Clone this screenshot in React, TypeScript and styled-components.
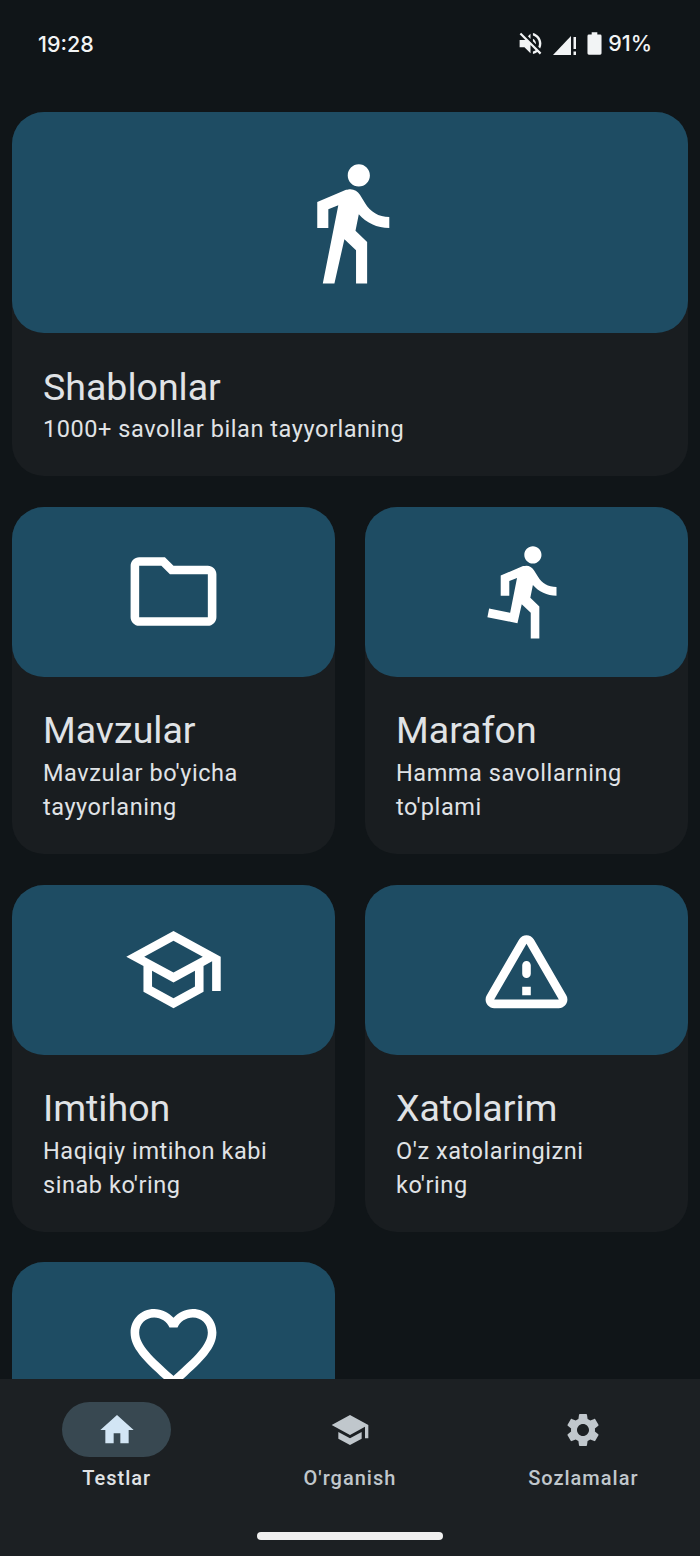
import * as React from "react";
import styled, { createGlobalStyle } from "styled-components";

const GlobalStyle = createGlobalStyle`
  html, body {
    margin: 0;
    padding: 0;
    background: #101518;
  }
  * {
    box-sizing: border-box;
  }
`;

const Screen = styled.div`
  width: 700px;
  height: 1556px;
  display: flex;
  flex-direction: column;
  overflow: hidden;
  background: #101518;
  font-family: Roboto, "Liberation Sans", sans-serif;
`;

const StatusBar = styled.div`
  flex: 0 0 112px;
  display: flex;
  justify-content: space-between;
  align-items: flex-start;
  padding: 31px 48px 0 38px;
  color: #f2f4f5;
  font-family: Inter, Roboto, sans-serif;
  font-weight: 500;
  font-size: 21.5px;
  line-height: 27px;
`;

const StatusRight = styled.div`
  display: flex;
  align-items: center;
  margin-top: -2px;
`;

const StatusIcon = styled.svg<{ $gap: number }>`
  display: block;
  fill: currentColor;
  margin-right: ${props => props.$gap}px;
`;

const Content = styled.div`
  flex: 1;
  min-height: 0;
  overflow: hidden;
  padding: 0 12px;
`;

const Grid = styled.div`
  display: grid;
  grid-template-columns: 323px 323px;
  column-gap: 30px;
  row-gap: 30.7px;
`;

const Card = styled.div<{ $wide?: boolean }>`
  grid-column: ${props => (props.$wide ? "1 / span 2" : "auto")};
  background: #191d20;
  border-radius: 32px;
`;

const Banner = styled.div<{ $wide?: boolean }>`
  height: ${props => (props.$wide ? 221.2 : 170)}px;
  display: flex;
  align-items: center;
  justify-content: center;
  background: #1e4c63;
  border-radius: 32px;
`;

const BannerIcon = styled.svg`
  display: block;
  fill: #ffffff;
`;

const CardText = styled.div`
  padding: 32.5px 31px 30px;
`;

const Title = styled.div`
  color: #e0e3e6;
  font-size: 37.5px;
  line-height: 42px;
  margin-bottom: 4.5px;
`;

const Subtitle = styled.div`
  color: #e0e3e6;
  font-size: 23.5px;
  line-height: 34px;
  letter-spacing: 0.56px;
`;

const BottomNav = styled.div`
  flex: 0 0 177px;
  position: relative;
  display: grid;
  grid-template-columns: repeat(3, 1fr);
  align-items: start;
  padding-top: 23px;
  background: #1c2023;
`;

const NavItem = styled.div`
  display: flex;
  flex-direction: column;
  align-items: center;
`;

const NavPill = styled.div<{ $active?: boolean }>`
  width: 109px;
  height: 55px;
  display: flex;
  align-items: center;
  justify-content: center;
  border-radius: 28px;
  background: ${props => (props.$active ? "#384851" : "transparent")};
`;

const NavIcon = styled.svg<{ $active?: boolean }>`
  display: block;
  fill: ${props => (props.$active ? "#d2e5f4" : "#c0c7cc")};
`;

const NavLabel = styled.div<{ $active?: boolean }>`
  margin-top: 8px;
  color: ${props => (props.$active ? "#e0e3e6" : "#c0c7cc")};
  font-size: 20px;
  font-weight: 500;
  line-height: 26px;
  letter-spacing: 1px;
`;

const HomeIndicator = styled.div`
  position: absolute;
  left: 257px;
  bottom: 16px;
  width: 186px;
  height: 8px;
  border-radius: 4px;
  background: #f0f0f0;
`;

const ICONS = {
  walk: "M13.5 5.5c1.1 0 2-.9 2-2s-.9-2-2-2-2 .9-2 2 .9 2 2 2zM9.8 8.9L7 23h2.1l1.8-8 2.1 2v6h2v-7.5l-2.1-2 .6-3C14.8 12 16.8 13 19 13v-2c-1.9 0-3.5-1-4.3-2.4l-1-1.6c-.4-.6-1-1-1.7-1-.3 0-.5.1-.8.1L6 8.3V13h2V9.6l1.8-.7",
  run: "M13.49 5.48c1.1 0 2-.9 2-2s-.9-2-2-2-2 .9-2 2 .9 2 2 2zm-3.6 13.9l1-4.4 2.1 2v6h2v-7.5l-2.1-2 .6-3c1.3 1.5 3.3 2.5 5.5 2.5v-2c-1.9 0-3.5-1-4.3-2.4l-1-1.6c-.4-.6-1-1-1.7-1-.3 0-.5.1-.8.1l-5.2 2.2v4.7h2v-3.4l1.8-.7-1.6 8.1-4.9-1-.4 2 7 1.4z",
  folder: "M9.17 6l2 2H20v10H4V6h5.17M10 4H4c-1.1 0-1.99.9-1.99 2L2 18c0 1.1.9 2 2 2h16c1.1 0 2-.9 2-2V8c0-1.1-.9-2-2-2h-8l-2-2z",
  school: "M12 3L1 9l4 2.18v6L12 21l7-3.82v-6l2-1.09V17h2V9L12 3zm6.82 6L12 12.72 5.18 9 12 5.28 18.82 9zM17 15.99l-5 2.73-5-2.73v-3.72L12 15l5-2.73v3.72z",
  warning: "M12 5.99L19.53 19H4.47L12 5.99M2.74 18c-.77 1.33.19 3 1.73 3h15.06c1.54 0 2.5-1.67 1.73-3L13.73 4.99c-.77-1.33-2.69-1.33-3.46 0L2.74 18zM11 11v2c0 .55.45 1 1 1s1-.45 1-1v-2c0-.55-.45-1-1-1s-1 .45-1 1zm0 5h2v2h-2z",
  heart: "M16.5 3c-1.74 0-3.41.81-4.5 2.09C10.91 3.81 9.24 3 7.5 3 4.42 3 2 5.42 2 8.5c0 3.78 3.4 6.86 8.55 11.54L12 21.35l1.45-1.32C18.6 15.36 22 12.28 22 8.5 22 5.42 19.58 3 16.5 3zm-4.4 15.55l-.1.1-.1-.1C7.14 14.24 4 11.39 4 8.5 4 6.5 5.5 5 7.5 5c1.54 0 3.04.99 3.57 2.36h1.87C13.46 5.99 14.96 5 16.5 5c2 0 3.5 1.5 3.5 3.5 0 2.89-3.14 5.74-7.9 10.05z",
  home: "M10 20v-6h4v6h5v-8h3L12 3 2 12h3v8z",
  schoolFilled: "M5 13.18v4L12 21l7-3.82v-4L12 17l-7-3.82zM12 3L1 9l11 6 9-4.91V17h2V9L12 3z",
  settings: "M19.14 12.94c.04-.3.06-.61.06-.94 0-.32-.02-.64-.07-.94l2.03-1.58c.18-.14.23-.41.12-.61l-1.92-3.32c-.12-.22-.37-.29-.59-.22l-2.39.96c-.5-.38-1.03-.7-1.62-.94l-.36-2.54c-.04-.24-.24-.41-.48-.41h-3.84c-.24 0-.43.17-.47.41l-.36 2.54c-.59.24-1.13.57-1.62.94l-2.39-.96c-.22-.08-.47 0-.59.22L2.74 8.87c-.12.21-.08.47.12.61l2.03 1.58c-.05.3-.09.63-.09.94s.02.64.07.94l-2.03 1.58c-.18.14-.23.41-.12.61l1.92 3.32c.12.22.37.29.59.22l2.39-.96c.5.38 1.03.7 1.62.94l.36 2.54c.05.24.24.41.48.41h3.84c.24 0 .44-.17.47-.41l.36-2.54c.59-.24 1.13-.56 1.62-.94l2.39.96c.22.08.47 0 .59-.22l1.92-3.32c.12-.22.07-.47-.12-.61l-2.01-1.58zM12 15.6c-1.98 0-3.6-1.62-3.6-3.6s1.62-3.6 3.6-3.6 3.6 1.62 3.6 3.6-1.62 3.6-3.6 3.6z",
  mute: "M16.5 12c0-1.77-1.02-3.29-2.5-4.03v2.21l2.45 2.45c.03-.2.05-.41.05-.63zm2.5 0c0 .94-.2 1.82-.54 2.64l1.51 1.51C20.63 14.91 21 13.5 21 12c0-4.28-2.99-7.86-7-8.77v2.06c2.89.86 5 3.54 5 6.71zM4.27 3L3 4.27 7.73 9H3v6h4l5 5v-6.73l4.25 4.25c-.67.52-1.42.93-2.25 1.18v2.06c1.38-.31 2.63-.95 3.69-1.81L19.73 21 21 19.73l-9-9L4.27 3zM12 4L9.91 6.09 12 8.18V4z"
};

type IconName = keyof typeof ICONS;

const cards: ReadonlyArray<{
  icon: IconName;
  title?: string;
  text?: string;
  wide?: boolean;
}> = [
  { icon: "walk", title: "Shablonlar", text: "1000+ savollar bilan tayyorlaning", wide: true },
  { icon: "folder", title: "Mavzular", text: "Mavzular bo'yicha tayyorlaning" },
  { icon: "run", title: "Marafon", text: "Hamma savollarning to'plami" },
  { icon: "school", title: "Imtihon", text: "Haqiqiy imtihon kabi sinab ko'ring" },
  { icon: "warning", title: "Xatolarim", text: "O'z xatolaringizni ko'ring" },
  // the last card runs under the bottom bar, only its banner shows
  { icon: "heart" }
];

const tabs: ReadonlyArray<{ icon: IconName; label: string; active?: boolean }> = [
  { icon: "home", label: "Testlar", active: true },
  { icon: "schoolFilled", label: "O'rganish" },
  { icon: "settings", label: "Sozlamalar" }
];

export default function App(): React.ReactElement {
  return (
    <Screen>
      <GlobalStyle />
      <StatusBar>
        <span>19:28</span>
        <StatusRight>
          <StatusIcon $gap={8} width="29" height="29" viewBox="0 0 24 24">
            <path d={ICONS.mute} />
          </StatusIcon>
          <StatusIcon $gap={10} width="24" height="22" viewBox="0 0 24 22">
            <path d="M0 22 L18 3 V22 Z" />
            <path d="M20.5 4 h2.5 v12 h-2.5 z M20.5 18.5 h2.5 v3.5 h-2.5 z" />
          </StatusIcon>
          <StatusIcon $gap={6} width="15" height="23" viewBox="0 0 16 24">
            <path d="M5 0 h6 v2.5 h3 a1.5 1.5 0 0 1 1.5 1.5 v18.5 a1.5 1.5 0 0 1 -1.5 1.5 h-12 a1.5 1.5 0 0 1 -1.5 -1.5 v-18.5 a1.5 1.5 0 0 1 1.5 -1.5 h3 z" />
          </StatusIcon>
          <span>91%</span>
        </StatusRight>
      </StatusBar>
      <Content>
        <Grid>
          {cards.map(card => (
            <Card key={card.icon} $wide={card.wide}>
              <Banner $wide={card.wide}>
                <BannerIcon
                  width={card.wide ? 133 : 103}
                  height={card.wide ? 133 : 103}
                  viewBox="0 0 24 24"
                >
                  <path d={ICONS[card.icon]} />
                </BannerIcon>
              </Banner>
              {card.title ? (
                <CardText>
                  <Title>{card.title}</Title>
                  <Subtitle>{card.text}</Subtitle>
                </CardText>
              ) : null}
            </Card>
          ))}
        </Grid>
      </Content>
      <BottomNav>
        {tabs.map(tab => (
          <NavItem key={tab.label}>
            <NavPill $active={tab.active}>
              <NavIcon $active={tab.active} width="40" height="40" viewBox="0 0 24 24">
                <path d={ICONS[tab.icon]} />
              </NavIcon>
            </NavPill>
            <NavLabel $active={tab.active}>{tab.label}</NavLabel>
          </NavItem>
        ))}
        <HomeIndicator />
      </BottomNav>
    </Screen>
  );
}
